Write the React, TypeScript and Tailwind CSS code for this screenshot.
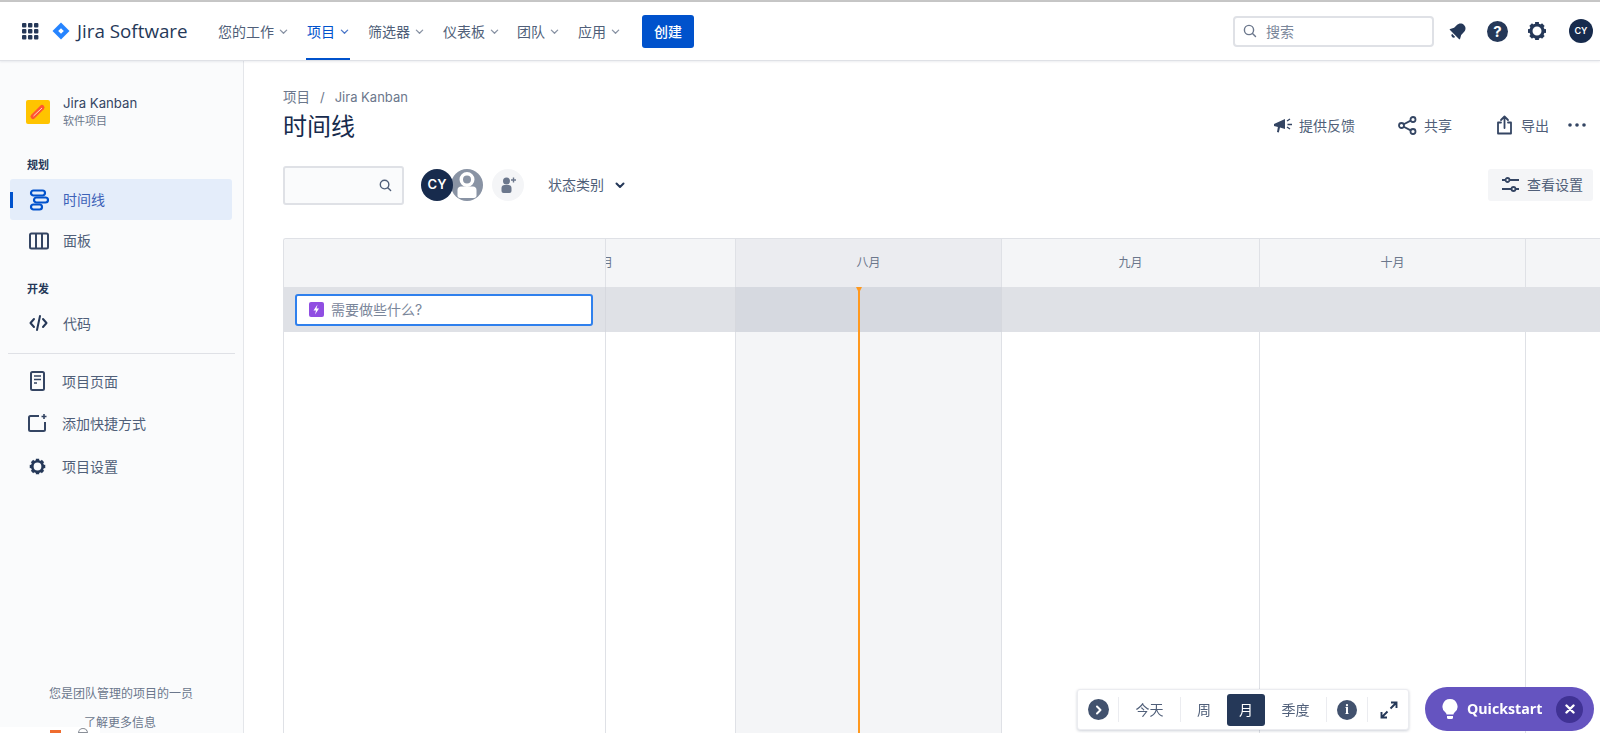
import React from "react";

const Chevron = ({ className = "", size = 9, w = 1.4 }: { className?: string; size?: number; w?: number }) => (
  <svg width={size} height={size} viewBox="0 0 10 10" className={className} fill="none" stroke="currentColor" strokeWidth={w} strokeLinecap="round" strokeLinejoin="round">
    <path d="M1.500 3.500 5 7l3.500-3.500" />
  </svg>
);

const Gear = ({ size = 20, stroke = 3 }: { size?: number; stroke?: number }) => (
  <svg width={size} height={size} viewBox="0 0 24 24" fill="none" stroke="#253858" className="shrink-0">
    <circle cx="12" cy="12" r="6.600" strokeWidth={stroke + 0.4} />
    {[0, 45, 90, 135, 180, 225, 270, 315].map((a) => (
      <path key={a} d="M12 2.200v3.600" strokeWidth="4.200" transform={`rotate(${a} 12 12)`} />
    ))}
  </svg>
);

const NavItem = ({ label, active, mr }: { label: string; active?: boolean; mr: string }) => (
  <div className={`relative h-full flex items-center gap-[5px] pt-[1px] ${mr} ${active ? "text-[#0052cc]" : "text-[#505f79]"}`}>
    <span className="text-[14px] leading-none">{label}</span>
    <Chevron className={active ? "text-[#4c78c9]" : "text-[#8993a4]"} />
    {active && <div className="absolute left-[-1px] right-[-1px] bottom-0 h-[2px] bg-[#0052cc]" />}
  </div>
);

const SideItem = ({ icon, label, active, h = "h-[41px]" }: { icon: React.ReactNode; label: string; active?: boolean; h?: string }) => (
  <div className={`relative flex items-center ${h} ml-[10px] mr-[11px] rounded-[3px] ${active ? "bg-[#e4edfa] text-[#3d62b8]" : "text-[#505f79]"}`}>
    {active && <div className="absolute left-0 top-[13px] h-[16px] w-[3px] bg-[#0052cc]" />}
    <div className="w-[53px] pl-[19px] flex items-center shrink-0">{icon}</div>
    <span className="text-[14px]">{label}</span>
  </div>
);

const Sep = () => <div className="w-px h-[25px] bg-[#ebecf0]" />;

export default function App() {
  return (
    <div
      className="w-[1600px] h-[733px] overflow-hidden flex flex-col bg-white text-[#505f79]"
      style={{ fontFamily: 'Inter, "Noto Sans CJK SC", sans-serif' }}
    >
      <div className="h-[2px] bg-[#c6c6c6] shrink-0" />
      {/* top nav */}
      <header className="h-[59px] shrink-0 flex items-center pl-[22px] pr-[7px] bg-white border-b border-[#dfe1e6] shadow-[0_1px_2px_rgba(9,30,66,0.08)] relative z-10">
        <svg width="17" height="17" viewBox="0 0 17 17" fill="#253858" className="mr-[13px]">
          {[0, 6, 12].flatMap((x) =>
            [0, 6, 12].map((y) => <rect key={`${x}-${y}`} x={x} y={y} width="4.400" height="4.400" rx="1" />)
          )}
        </svg>
        <svg width="18" height="18" viewBox="0 0 18 18" className="mr-[7px]">
          <path d="M9 .5 17.500 9 9 17.500.5 9z" fill="#2684ff" />
          <path d="M9 6.200 11.800 9 9 11.800 6.200 9z" fill="#fff" />
        </svg>
        <span className="w-[141px] shrink-0 text-[18.800px] text-[#253858]" style={{ fontFamily: '"Open Sans", sans-serif' }}>Jira Software</span>
        <div className="h-full flex items-center">
          <NavItem label="您的工作" mr="mr-[19px]" />
          <NavItem label="项目" active mr="mr-[19px]" />
          <NavItem label="筛选器" mr="mr-[19px]" />
          <NavItem label="仪表板" mr="mr-[18px]" />
          <NavItem label="团队" mr="mr-[19px]" />
          <NavItem label="应用" mr="mr-[22px]" />
        </div>
        <button className="w-[52px] h-[33px] rounded-[3px] bg-[#0052cc] text-white text-[14px] font-medium">创建</button>
        <div className="ml-auto w-[201px] h-[31px] mr-[13px] rounded-[4px] border-2 border-[#dfe1e6] bg-white flex items-center pl-[8px] text-[#7a869a]">
          <svg width="14" height="14" viewBox="0 0 14 14" fill="none" stroke="#6b778c" strokeWidth="1.400" strokeLinecap="round" className="mr-[9px]">
            <circle cx="6" cy="6" r="4.600" />
            <path d="m9.500 9.500 3 3" />
          </svg>
          <span className="text-[14px]">搜索</span>
        </div>
        <div className="w-[22px] flex justify-center mr-[18px]">
          <svg width="20" height="20" viewBox="0 0 20 20" fill="#253858">
            <g transform="rotate(45 10 10)">
              <path d="M10 1.500c-3.200 0-5 2.400-5 5.400v3.600L3 14v1h14v-1l-2-3.500V6.900c0-3-1.800-5.400-5-5.400z" />
              <path d="M7.800 16.200h4.400a2.200 2.200 0 0 1-4.400 0z" />
            </g>
          </svg>
        </div>
        <div className="w-[21px] h-[21px] rounded-full bg-[#253858] text-white flex items-center justify-center text-[15px] font-bold leading-none mr-[18px]">?</div>
        <div className="mr-[21px]"><Gear size={22} /></div>
        <div className="w-[24px] h-[24px] rounded-full bg-[#172b4d] text-white flex items-center justify-center text-[9px] font-semibold">CY</div>
      </header>

      <div className="flex-1 flex min-h-0">
        {/* sidebar */}
        <aside className="relative w-[244px] shrink-0 bg-[#fafbfc] border-r border-[#e4e6ea] flex flex-col">
          <div className="flex items-center pl-[26px] pt-[33px]">
            <svg width="24" height="24" viewBox="0 0 24 24" className="mr-[13px] shrink-0">
              <rect width="24" height="24" rx="2" fill="#ffc400" />
              <path d="M7 16.500 16 7.500" stroke="#ff5630" strokeWidth="5" strokeLinecap="round" />
              <path d="M7.500 16 16 8" stroke="#ffd9cc" strokeWidth="1" />
            </svg>
            <div className="flex flex-col">
              <span className="text-[13.200px] leading-[18px] text-[#344563]">Jira Kanban</span>
              <span className="text-[11px] leading-[18px] text-[#6b778c]">软件项目</span>
            </div>
          </div>
          <div className="pl-[27px] mt-[27px] mb-[6px] text-[11px] leading-[16px] font-semibold text-[#253858]">规划</div>
          <SideItem
            active
            label="时间线"
            icon={
              <svg width="20" height="22" viewBox="0 0 20 22" fill="none" stroke="#0052cc" strokeWidth="2.200">
                <rect x="2" y="1.500" width="14" height="5" rx="2.500" />
                <rect x="5" y="8.500" width="14" height="5" rx="2.500" />
                <rect x="2" y="15.500" width="11" height="5" rx="2.500" />
              </svg>
            }
          />
          <SideItem
            label="面板"
            icon={
              <svg width="20" height="18" viewBox="0 0 20 18" fill="none" stroke="#344563" strokeWidth="2">
                <rect x="1" y="1.500" width="18" height="15" rx="1.500" />
                <path d="M7 1.500v15M13 1.500v15" />
              </svg>
            }
          />
          <div className="pl-[27px] mt-[20px] mb-[6px] text-[11px] leading-[16px] font-semibold text-[#253858]">开发</div>
          <SideItem
            label="代码"
            h="h-[40px]"
            icon={
              <svg width="19" height="18" viewBox="0 0 19 18" fill="none" stroke="#253858" strokeWidth="2" strokeLinecap="round" strokeLinejoin="round">
                <path d="M5 5 1.500 9 5 13M14 5l3.500 4-3.500 4M11 2 8 16" />
              </svg>
            }
          />
          <div className="h-px bg-[#dfe1e6] mx-[8px] mt-[10px] mb-[6px]" />
          <div className="-ml-[1px]">
            <SideItem
              label="项目页面"
              h="h-[42px]"
              icon={
                <svg width="15" height="20" viewBox="0 0 15 20" fill="none" stroke="#344563" strokeWidth="2" className="ml-[2px]">
                  <rect x="1" y="1" width="13" height="18" rx="1.500" />
                  <path d="M4 5h7M4 8.500h7M4 12h3" strokeWidth="1.600" />
                </svg>
              }
            />
            <SideItem
              label="添加快捷方式"
              h="h-[43px]"
              icon={
                <svg width="19" height="19" viewBox="0 0 19 19" fill="none" stroke="#344563" strokeWidth="2">
                  <path d="M11 2H2.500A1.500 1.500 0 0 0 1 3.500v12A1.500 1.500 0 0 0 2.500 17h13a1.500 1.500 0 0 0 1.500-1.500V8" />
                  <path d="M16 0v5M13.500 2.500h5" strokeWidth="1.600" />
                </svg>
              }
            />
            <SideItem label="项目设置" h="h-[42px]" icon={<Gear size={19} />} />
          </div>
          <div className="mt-auto flex flex-col items-center text-[12px] text-[#6b778c] pr-[1px] pb-[1px]">
            <span className="leading-[18px] mb-[11px]">您是团队管理的项目的一员</span>
            <span className="leading-[18px] -ml-[2px]">了解更多信息</span>
          </div>
          <div className="absolute left-0 bottom-0 w-[100px] h-[6px] bg-white overflow-hidden">
            <div className="absolute left-[50px] top-[3px] w-[11px] h-[3px] bg-[#ef6c2f]" />
            <div className="absolute left-[78px] top-[1px] w-[10px] h-[5px] rounded-t-full border border-[#8a8f98]" />
          </div>
        </aside>

        {/* content */}
        <main className="flex-1 min-w-0 pl-[39px] flex flex-col">
          <div className="flex items-center pt-[27px] text-[13px] leading-[18px] text-[#6b778c]">
            <span className="text-[13.500px]">项目</span>
            <span className="mx-[10px]">/</span>
            <span>Jira Kanban</span>
          </div>
          <div className="flex items-center mt-[3px] h-[36px]">
            <h1 className="text-[24px] leading-[36px] text-[#172b4d]">时间线</h1>
            <div className="ml-auto flex items-center pr-[14px] pb-[4px] text-[14px]">
              <svg width="20" height="20" viewBox="0 0 20 20" fill="#344563" className="mr-[6px]">
                <path d="M1 9 12 4v10l-5-1.500-1.200 5-1.800-.5.900-5L1 11z" />
                <path d="m14 6 3-2M14.500 9.500H19M14 12l3 2" stroke="#344563" strokeWidth="1.400" />
              </svg>
              <span className="mr-[43px]">提供反馈</span>
              <svg width="19" height="19" viewBox="0 0 19 19" fill="none" stroke="#344563" strokeWidth="1.800" className="mr-[7px]">
                <circle cx="3.500" cy="9.500" r="2.500" />
                <circle cx="15" cy="3.500" r="2.500" />
                <circle cx="15" cy="15.500" r="2.500" />
                <path d="m5.700 8.300 7-3.700M5.700 10.700l7 3.700" />
              </svg>
              <span className="mr-[44px]">共享</span>
              <svg width="17" height="20" viewBox="0 0 17 20" fill="none" stroke="#344563" strokeWidth="1.800" strokeLinejoin="round" strokeLinecap="round" className="mr-[8px]">
                <path d="M5 7.500H2v11h13v-11h-3M8.500 13V1.500M5 5l3.500-3.500L12 5" />
              </svg>
              <span className="mr-[19px]">导出</span>
              <svg width="18" height="4" viewBox="0 0 18 4" fill="#344563">
                <circle cx="2" cy="2" r="1.800" />
                <circle cx="9" cy="2" r="1.800" />
                <circle cx="16" cy="2" r="1.800" />
              </svg>
            </div>
          </div>

          {/* filters */}
          <div className="flex items-center mt-[20px] h-[39px] pr-[7px]">
            <div className="w-[121px] h-[39px] rounded-[3px] border-2 border-[#dfe1e6] bg-[#fafbfc] flex items-center justify-end pr-[10px] mr-[17px] translate-y-px">
              <svg width="13" height="13" viewBox="0 0 14 14" fill="none" stroke="#505f79" strokeWidth="1.500" strokeLinecap="round">
                <circle cx="6" cy="6" r="4.600" />
                <path d="m9.500 9.500 3 3" />
              </svg>
            </div>
            <div className="relative z-10 w-[32px] h-[32px] rounded-full bg-[#172b4d] text-white flex items-center justify-center text-[13px] font-semibold">CY</div>
            <div className="w-[32px] h-[32px] -ml-[2px] rounded-full bg-[#8993a4] flex items-center justify-center overflow-hidden mr-[9px]">
              <svg width="32" height="32" viewBox="0 0 32 32" fill="#fff">
                <path fillRule="evenodd" d="M16 3a7.500 7.500 0 1 1 0 15 7.500 7.500 0 0 1 0-15zm0 3.500a4 4 0 1 0 0 8 4 4 0 0 0 0-8z" />
                <path d="M6.500 21c0-2 1.500-3.500 3.500-3.500h12c2 0 3.500 1.500 3.500 3.500v5.500c0 1.500-1 2.500-2.500 2.500H9c-1.500 0-2.500-1-2.500-2.500z" />
              </svg>
            </div>
            <div className="w-[32px] h-[32px] rounded-full bg-[#f4f5f7] flex items-center justify-center mr-[24px]">
              <svg width="18" height="18" viewBox="0 0 18 18" fill="#6b778c">
                <circle cx="7.500" cy="5" r="3.500" />
                <path d="M2.500 12c0-1.700 1.300-3 3-3h4c1.700 0 3 1.300 3 3v3a2 2 0 0 1-2 2h-6a2 2 0 0 1-2-2z" />
                <path d="M14.500 1.500v5M12 4h5" stroke="#6b778c" strokeWidth="1.400" />
              </svg>
            </div>
            <span className="text-[14px] mr-[10px]">状态类别</span>
            <Chevron className="text-[#253858] ml-[1px]" size={10} w={2} />
            <div className="ml-auto w-[105px] h-[32px] rounded-[3px] bg-[#f4f5f7] flex items-center pl-[13px] text-[14px]">
              <svg width="19" height="17" viewBox="0 0 19 17" fill="none" stroke="#344563" strokeWidth="1.800" className="mr-[7px]">
                <path d="M1 4h3.500M9 4h9M1 13h9.500M15 13h3" />
                <circle cx="6.500" cy="4" r="2" />
                <circle cx="12.500" cy="13" r="2" />
              </svg>
              查看设置
            </div>
          </div>

          {/* timeline */}
          <div className="relative flex-1 mt-[34px] min-h-0 grid grid-cols-[322px_130px_266px_258px_266px_1fr] grid-rows-[48px_45px_1fr] border-l border-t border-[#dfe1e6] rounded-tl-[3px] overflow-hidden text-[12px] text-[#6b778c]">
            <div className="bg-[#f4f5f7] border-r border-[#dfe1e6]" />
            <div className="bg-[#f4f5f7] border-r border-[#dfe1e6] overflow-hidden flex items-center">
              <span className="-ml-[17px] whitespace-nowrap">七月</span>
            </div>
            <div className="bg-[#ebecf0] border-r border-[#dfe1e6] flex items-center justify-center">八月</div>
            <div className="bg-[#f4f5f7] border-r border-[#dfe1e6] flex items-center justify-center">九月</div>
            <div className="bg-[#f4f5f7] border-r border-[#dfe1e6] flex items-center justify-center">十月</div>
            <div className="bg-[#f4f5f7]" />

            <div className="bg-[#dfe1e6] flex items-center pl-[11px] pr-[12px] border-r border-[#d6d8de]">
              <div className="w-full h-[32px] rounded-[3px] border-2 border-[#2f80ed] bg-white flex items-center pl-[12px]">
                <svg width="15" height="15" viewBox="0 0 15 15" className="mr-[7px] shrink-0">
                  <rect width="15" height="15" rx="2" fill="#904ee2" />
                  <path d="M8.500 2.500 4.500 8.500h2.500l-1 4 4-6H7.500z" fill="#fff" />
                </svg>
                <span className="text-[14px] text-[#7a869a]">需要做些什么?</span>
              </div>
            </div>
            <div className="bg-[#dfe1e6] border-r border-[#d6d8de]" />
            <div className="bg-[#d6d9e0] border-r border-[#d6d8de]" />
            <div className="bg-[#dfe1e6] col-span-3" />

            <div className="border-r border-[#dfe1e6]" />
            <div className="border-r border-[#dfe1e6]" />
            <div className="bg-[#f4f5f7] border-r border-[#dfe1e6]" />
            <div className="border-r border-[#dfe1e6]" />
            <div className="border-r border-[#dfe1e6]" />
            <div />

            <div className="absolute left-[574px] top-[48px] bottom-0 w-[2px] bg-[#ff991f]" />
            <div className="absolute left-[572px] top-[48px] w-0 h-0 border-l-[3px] border-r-[3px] border-t-[6px] border-l-transparent border-r-transparent border-t-[#ff991f]" />
          </div>
        </main>
      </div>

      {/* floating toolbar */}
      <div className="fixed left-[1077px] top-[689px] w-[332px] h-[41px] bg-white rounded-[3px] border border-[#ebecf0] shadow-[0_1px_3px_rgba(9,30,66,0.2)] flex items-center text-[14px] text-[#505f79]">
        <div className="ml-[10px] w-[21px] h-[21px] rounded-full bg-[#42526e] flex items-center justify-center mr-[9px]">
          <svg width="9" height="10" viewBox="0 0 9 10" fill="none" stroke="#fff" strokeWidth="2" strokeLinecap="round" strokeLinejoin="round">
            <path d="M3 1.500 6.500 5 3 8.500" />
          </svg>
        </div>
        <Sep />
        <span className="w-[61px] text-center">今天</span>
        <Sep />
        <span className="w-[46px] text-center">周</span>
        <div className="w-[38px] h-[32px] rounded-[3px] bg-[#253858] text-white flex items-center justify-center">月</div>
        <span className="w-[61px] text-center">季度</span>
        <Sep />
        <div className="w-[20px] h-[20px] rounded-full bg-[#42526e] text-white flex items-center justify-center text-[14px] font-bold leading-none mx-[10px]" style={{ fontFamily: '"Liberation Serif", serif' }}>i</div>
        <Sep />
        <svg width="18" height="18" viewBox="0 0 18 18" fill="none" stroke="#253858" strokeWidth="1.900" className="ml-[12px]">
          <path d="M11 1.500h5.500V7M16 2l-5.500 5.500M7 16.500H1.500V11M2 16l5.500-5.500" />
        </svg>
      </div>

      <div className="fixed left-[1425px] top-[687px] w-[169px] h-[44px] rounded-full bg-[#6554c0] flex items-center pl-[17px] text-white">
        <svg width="16" height="21" viewBox="0 0 16 21" fill="#fff" className="mr-[9px]">
          <path d="M8 0a7.500 7.500 0 0 0-4.500 13.500c.7.600 1 1.300 1 2h7c0-.7.300-1.400 1-2A7.500 7.500 0 0 0 8 0z" />
          <path d="M5 17h6v1.500a1.500 1.500 0 0 1-1.500 1.500h-3A1.500 1.500 0 0 1 5 18.500z" />
        </svg>
        <span className="text-[14.200px] font-bold" style={{ fontFamily: '"Open Sans", sans-serif' }}>Quickstart</span>
        <div className="ml-auto mr-[11px] w-[27px] h-[27px] rounded-full bg-[#403294] flex items-center justify-center">
          <svg width="10" height="10" viewBox="0 0 10 10" fill="none" stroke="#fff" strokeWidth="2.400" strokeLinecap="round">
            <path d="m1.500 1.500 7 7M8.500 1.500l-7 7" />
          </svg>
        </div>
      </div>
    </div>
  );
}
